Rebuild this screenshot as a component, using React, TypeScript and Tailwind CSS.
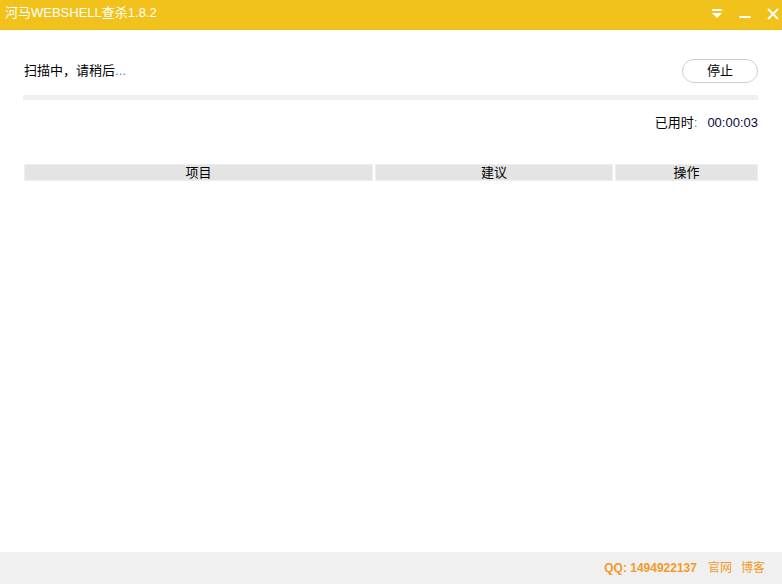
import React from "react";

const font = { fontFamily: '"Liberation Sans", "Noto Sans CJK SC", sans-serif' };

export default function App() {
  return (
    <div className="w-[782px] h-[584px] flex flex-col bg-white overflow-hidden" style={font}>
      <div className="h-[30px] bg-[#f1c11c] flex items-center pl-[5px] text-white text-[13px] leading-none">
        <span className="flex-1 -mt-[5px]">河马WEBSHELL查杀1.8.2</span>
        <div className="flex items-center h-full">
          <svg width="12" height="12" viewBox="0 0 12 12" className="mr-[16px] -mt-[2px]">
            <rect x="1" y="1" width="10" height="2" fill="white" />
            <polygon points="1,5 11,5 6,10" fill="white" />
          </svg>
          <svg width="12" height="12" viewBox="0 0 12 12" className="mr-[16px]">
            <rect x="0.5" y="7" width="11" height="2" fill="white" />
          </svg>
          <svg width="12" height="12" viewBox="0 0 12 12" className="mr-[3px] -mt-[2px]">
            <path d="M1 1 L11 11 M11 1 L1 11" stroke="white" strokeWidth="2" />
          </svg>
        </div>
      </div>
      <div className="flex-1 flex flex-col pl-[23px] pr-[24px] pt-[29px]">
        <div className="flex items-center justify-between h-[24px]">
          <span className="text-[13px] text-black pl-[1px]">
            扫描中，请稍后<span className="text-[#2a8ae6]">...</span>
          </span>
          <button className="w-[76px] h-[24px] rounded-full border border-[#c9ced6] bg-white text-[13px] text-black flex items-center justify-center">
            停止
          </button>
        </div>
        <div className="mt-[12px] h-[5px] bg-[#f0f0f0]" />
        <div className="mt-[14px] h-[17px] flex items-center justify-end text-[13px] text-black">
          <span>已用时</span>
          <span className="text-[#1e7fd8]">:</span>
          <span className="ml-[10px] text-[#0a0a40]">00:00:03</span>
        </div>
        <div className="mt-[33px] ml-[1px] flex gap-[2px] h-[17px] text-[13px] text-black">
          <div className="w-[349px] bg-[#e4e4e4] border border-[#eeeeee] flex items-center justify-center">项目</div>
          <div className="w-[238px] bg-[#e4e4e4] border border-[#eeeeee] flex items-center justify-center">建议</div>
          <div className="flex-1 bg-[#e4e4e4] border border-[#eeeeee] flex items-center justify-center">操作</div>
        </div>
      </div>
      <div className="h-[32px] bg-[#f0f0f0] flex items-center justify-end pr-[17px] text-[#f39a28] text-[12px]">
        <span className="font-bold">QQ: 1494922137</span>
        <span className="ml-[11px]">官网</span>
        <span className="ml-[9px]">博客</span>
      </div>
    </div>
  );
}
